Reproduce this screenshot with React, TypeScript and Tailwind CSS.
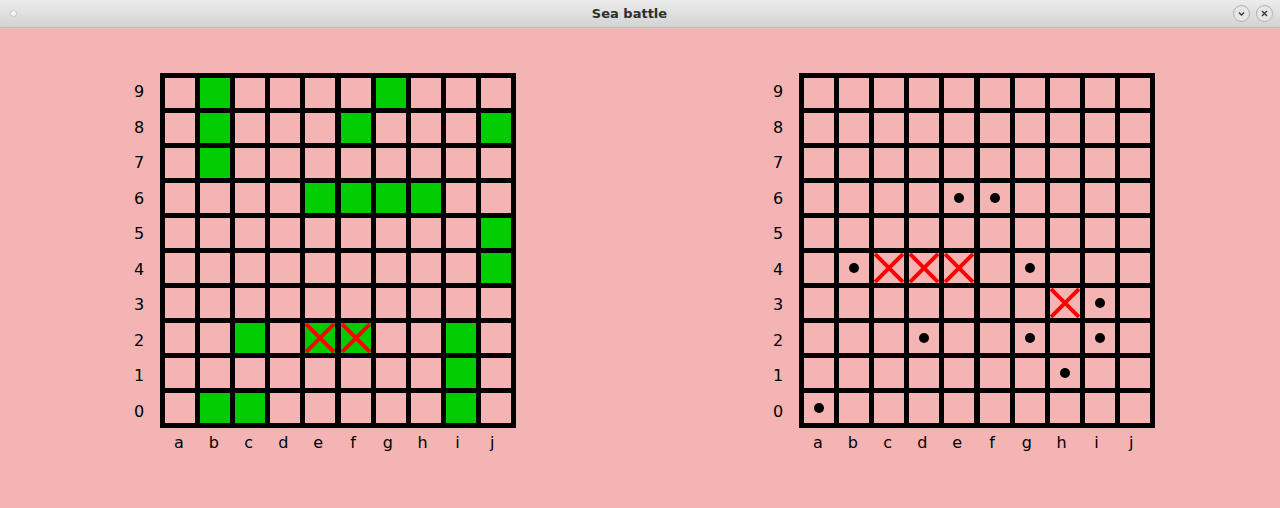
import React from "react";

type Mark = "." | "g" | "x" | "gx" | "o";

const cols = ["a", "b", "c", "d", "e", "f", "g", "h", "i", "j"];

// rows listed top (9) to bottom (0)
const myBoard: string[] = [
  ".g....g...",
  ".g...g...g",
  ".g........",
  "....gggg..",
  ".........g",
  ".........g",
  "..........",
  "..g.XX..g.",
  "........g.",
  ".gg.....g.",
];

const enemyBoard: string[] = [
  "..........",
  "..........",
  "..........",
  "....oo....",
  "..........",
  ".oxxx.o...",
  ".......xo.",
  "...o..o.o.",
  ".......o..",
  "o.........",
];

const toMark = (ch: string): Mark => {
  if (ch === "g") return "g";
  if (ch === "X") return "gx";
  if (ch === "x") return "x";
  if (ch === "o") return "o";
  return ".";
};

const Cross = () => (
  <svg width="30" height="30" viewBox="0 0 30 30" className="block">
    <path d="M1 1 L29 29 M29 1 L1 29" stroke="#ff0000" strokeWidth="4" strokeLinecap="butt" />
  </svg>
);

const Cell: React.FC<{ mark: Mark }> = ({ mark }) => {
  const green = mark === "g" || mark === "gx";
  return (
    <div
      className={`w-[30px] h-[30px] flex items-center justify-center ${
        green ? "bg-[#00cc00]" : "bg-[#f4b4b4]"
      }`}
    >
      {(mark === "x" || mark === "gx") && <Cross />}
      {mark === "o" && <div className="w-[10px] h-[10px] rounded-full bg-black" />}
    </div>
  );
};

const Board: React.FC<{ rows: string[] }> = ({ rows }) => {
  return (
    <div className="flex flex-col">
      <div className="flex">
        <div className="w-[42px] flex flex-col pt-[4px] gap-[5.5px]">
          {rows.map((_, i) => (
            <div key={i} className="h-[30px] flex items-center justify-center text-[16px] text-black">
              {9 - i}
            </div>
          ))}
        </div>
        <div className="bg-black p-[5px] grid grid-cols-10 gap-[5px] w-[356px]">
          {rows.map((row, r) =>
            row.split("").map((ch, c) => <Cell key={`${r}-${c}`} mark={toMark(ch)} />)
          )}
        </div>
      </div>
      <div className="flex pl-[42px] mt-[5px]">
        <div className="flex gap-[4.8px] pl-[4px]">
          {cols.map((c) => (
            <div key={c} className="w-[30px] h-[20px] leading-[20px] text-center text-[16px] text-black">
              {c}
            </div>
          ))}
        </div>
      </div>
    </div>
  );
};

export default function App() {
  return (
    <div
      className="w-[1280px] h-[508px] bg-[#f4b4b4] flex flex-col"
      style={{ fontFamily: '"DejaVu Sans", sans-serif' }}
    >
      <div className="h-[28px] shrink-0 bg-gradient-to-b from-[#ececec] to-[#d3d3d3] border-b border-[#bdbdbd] flex items-center relative">
        <div className="ml-[10px] w-[7px] h-[7px] rounded-full bg-[#f7f7f7] border border-[#c4c4c4]" />
        <div className="absolute left-0 right-[21px] text-center text-[13px] font-semibold text-[#2e2e2e]">
          Sea battle
        </div>
        <div className="ml-auto mr-[7px] flex gap-[6px]">
          <div className="w-[17px] h-[17px] rounded-full border border-[#b0b0b0] bg-[#e6e6e6] flex items-center justify-center">
            <svg width="9" height="9" viewBox="0 0 9 9">
              <path d="M2 3.5 L4.5 6 L7 3.5" stroke="#333" strokeWidth="1.3" fill="none" />
            </svg>
          </div>
          <div className="w-[17px] h-[17px] rounded-full border border-[#b0b0b0] bg-[#e6e6e6] flex items-center justify-center">
            <svg width="9" height="9" viewBox="0 0 9 9">
              <path d="M2 2 L7 7 M7 2 L2 7" stroke="#333" strokeWidth="1.3" fill="none" />
            </svg>
          </div>
        </div>
      </div>
      <div className="flex pt-[45px] pl-[118px] gap-[241px]">
        <Board rows={myBoard} />
        <Board rows={enemyBoard} />
      </div>
    </div>
  );
}
